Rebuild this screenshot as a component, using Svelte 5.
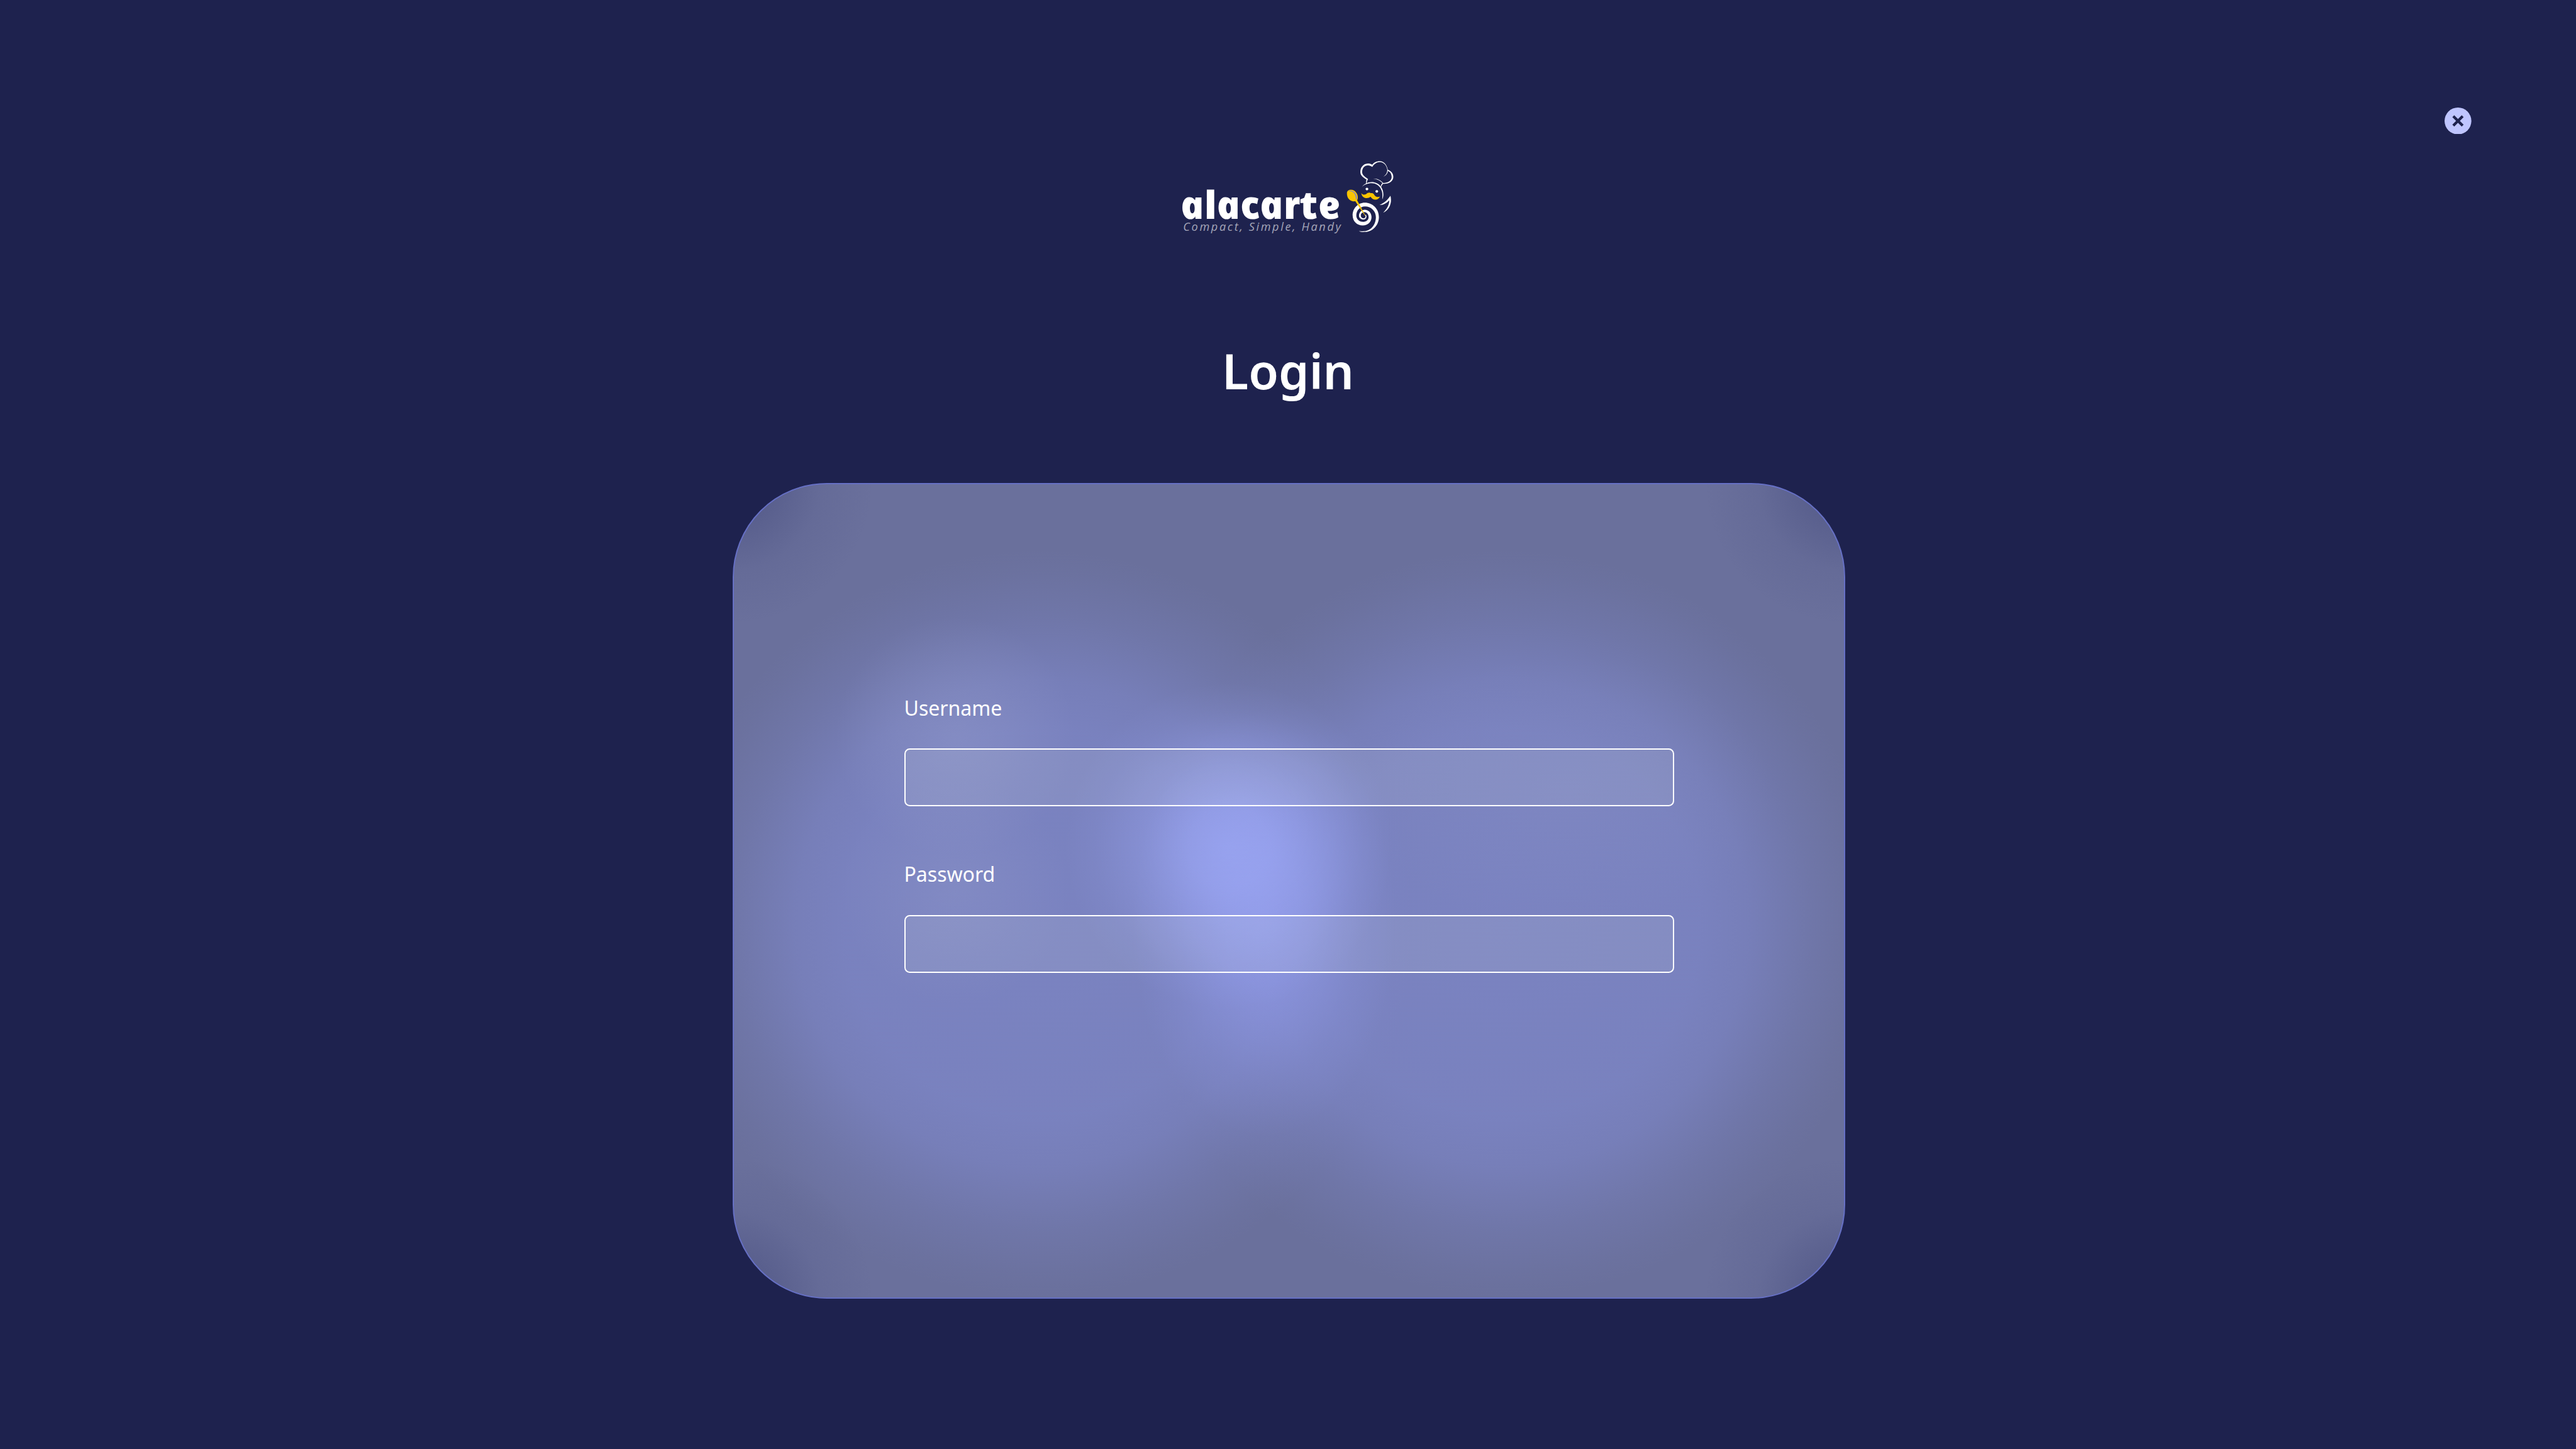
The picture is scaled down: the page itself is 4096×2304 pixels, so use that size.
<script>
  const fields = [
    { id: 'username', label: 'Username', type: 'text' },
    { id: 'password', label: 'Password', type: 'password' }
  ];
</script>

<main class="page">
  <header class="topbar">
    <button class="close" type="button" aria-label="Close">
      <svg viewBox="0 0 80 80" width="100%" height="100%">
        <circle cx="40" cy="40" r="40" fill="#bfc5ff" />
        <path d="M26 26 L54 54 M54 26 L26 54" stroke="#1e224e" stroke-width="8" />
      </svg>
    </button>
  </header>

  <svg class="logo" viewBox="3520 470 640 230" role="img" aria-label="alacarte">
    <!-- the italic cut has the single-storey a; the skew sets it upright -->
    <text class="brand" transform="translate(3527 651) skewX(12)" textLength="477" lengthAdjust="spacingAndGlyphs">alacarte</text>
    <text class="tagline" x="3528" y="687" textLength="470" lengthAdjust="spacing">Compact, Simple, Handy</text>
    <g transform="translate(3980 460) scale(0.33333)" fill="#fff">
      <!-- chef hat -->
      <path d="M335 92 C322 82 305 80 295 81 C252 84 229 118 229 158 C230 190 255 205 284 224 C280 238 280 250 280 263 L286 261 C286 246 290 232 298 220 C262 195 245 180 245 157 C245 122 265 97 297 97 C312 97 325 103 336 111 C352 85 375 67 405 68 C440 70 463 98 470 135 C470 165 455 188 430 200 C460 190 474 170 475 147 C497 155 509 178 509 203 C508 235 475 256 434 255 C415 235 385 214 346 216 C385 222 405 236 427 255 C418 264 413 275 411 284 L417 291 C417 280 423 270 433 262 C485 266 524 238 524 200 C524 170 505 147 475 137 C465 90 440 60 402 60 C375 60 350 72 335 92Z" />
      <!-- head -->
      <path d="M240 294 C262 262 295 246 330 246 C395 246 438 300 435 362 C434 378 430 390 427 398 L425 398 C428 360 427 335 416 315 C400 275 365 257 330 257 C295 257 262 270 240 294Z" />
      <circle cx="288" cy="309" r="12" />
      <circle cx="376" cy="330" r="12" />
      <!-- collar -->
      <path d="M498 369 C504 390 504 410 502 425 C495 470 470 505 433 521 C465 490 488 450 488 410 C465 435 430 455 401 452 C440 435 475 405 498 369Z" />
      <!-- spiral body -->
      <path d="M217 685 C232 694 250 694 272 693 C342 690 395 630 395 560 C395 487 340 431 268 431 C208 431 160 482 160 545 C160 597 200 635 250 635 C296 635 329 602 329 560 C329 522 302 494 268 494 C239 494 217 518 217 548 C217 568 236 582 255 582 C272 582 284 569 284 553 C284 546 280 541 275 539 L270 545 C274 547 276 550 275 554 C274 564 266 571 257 571 C243 570 233 560 233 546 C233 528 248 515 266 515 C288 516 303 535 303 560 C303 586 280 603 252 603 C218 603 193 578 193 545 C193 500 226 464 270 464 C326 464 368 506 368 560 C368 632 320 684 262 686 C245 687 230 684 217 685Z" />
      <!-- moustache and spoon -->
      <g fill="#fac400">
        <path d="M238 345 C250 362 265 362 280 355 C298 340 312 338 322 346 C340 342 350 352 355 364 C366 380 385 385 404 376 C396 395 380 405 360 404 C340 400 330 392 320 377 C308 388 290 392 272 388 C250 382 240 365 238 345Z" />
        <path d="M109 345 C110 320 135 310 160 317 C190 327 210 360 206 392 C205 401 202 405 200 409 L274 546 L270 547 L184 418 C145 424 108 400 109 345Z" />
      </g>
      <path fill="#6b78f0" d="M128 324 C150 316 175 332 187 352 C199 372 201 388 194 402 L190 402 C190 370 180 340 150 330 C140 326 133 327 128 328Z" />
    </g>
  </svg>

  <h1>Login</h1>

  <form class="card">
    {#each fields as field (field.id)}
      <div class="field">
        <label for={field.id}>{field.label}</label>
        <input id={field.id} type={field.type} />
      </div>
    {/each}
  </form>
</main>

<style>
  :global(body) {
    margin: 0;
    background: #1e224e;
  }
  .page {
    box-sizing: border-box;
    width: 4096px;
    height: 2304px;
    overflow: hidden;
    background: #1e224e;
    color: #fff;
    font-family: 'Noto Sans', 'Open Sans', sans-serif;
    display: flex;
    flex-direction: column;
    align-items: center;
  }
  .topbar {
    box-sizing: border-box;
    width: 100%;
    height: 250.67px;
    padding: 170.67px 166.3px 0 0;
    display: flex;
    justify-content: flex-end;
    align-items: flex-start;
    flex: none;
  }
  .close {
    width: 42.67px;
    height: 42.67px;
    padding: 0;
    border: 0;
    background: none;
  }
  .close svg {
    display: block;
  }
  .logo {
    display: block;
    flex: none;
    width: 341.33px;
    height: 122.67px;
    overflow: visible;
  }
  .brand {
    font-family: 'Open Sans', sans-serif;
    font-size: 115px;
    font-style: italic;
    font-weight: 800;
    fill: #fff;
  }
  .tagline {
    font-family: 'Open Sans', sans-serif;
    font-style: italic;
    font-size: 34px;
    fill: #a5a6b9;
  }
  h1 {
    flex: none;
    margin: 163.5px 0 0;
    height: 231.17px;
    font-size: 77.5px;
    line-height: 104px;
    font-weight: 600;
  }
  .card {
    box-sizing: border-box;
    flex: none;
    width: 1769px;
    height: 1297px;
    margin-left: 2px;
    padding: 330px 271px 0;
    border: 2px solid #6670c5;
    border-radius: 149.5px;
    background:
      radial-gradient(circle 225px at 0 0, rgba(40, 46, 98, 0.42), rgba(40, 46, 98, 0.26) 28%, rgba(40, 46, 98, 0.08) 62%, rgba(40, 46, 98, 0)),
      radial-gradient(circle 225px at 100% 0, rgba(40, 46, 98, 0.42), rgba(40, 46, 98, 0.26) 28%, rgba(40, 46, 98, 0.08) 62%, rgba(40, 46, 98, 0)),
      radial-gradient(circle 225px at 0 100%, rgba(40, 46, 98, 0.42), rgba(40, 46, 98, 0.26) 28%, rgba(40, 46, 98, 0.08) 62%, rgba(40, 46, 98, 0)),
      radial-gradient(circle 225px at 100% 100%, rgba(40, 46, 98, 0.42), rgba(40, 46, 98, 0.26) 28%, rgba(40, 46, 98, 0.08) 62%, rgba(40, 46, 98, 0)),
      radial-gradient(circle 260px at 44.6% 44.5%, rgba(162, 174, 255, 0.62), rgba(162, 174, 255, 0.53) 25%, rgba(162, 174, 255, 0.3) 52%, rgba(162, 174, 255, 0.08) 82%, rgba(162, 174, 255, 0)),
      radial-gradient(ellipse 210px 340px at 47.8% 54%, rgba(155, 165, 250, 0.45), rgba(155, 165, 250, 0.35) 30%, rgba(155, 165, 250, 0.1) 72%, rgba(155, 165, 250, 0)),
      radial-gradient(circle 190px at 20% 31%, rgba(150, 158, 204, 0.36), rgba(150, 158, 204, 0.22) 45%, rgba(150, 158, 204, 0)),
      radial-gradient(circle 180px at 20% 50%, rgba(150, 158, 204, 0.28), rgba(150, 158, 204, 0.16) 45%, rgba(150, 158, 204, 0)),
      radial-gradient(ellipse 330px 220px at 75% 38%, rgba(150, 158, 204, 0.14), rgba(150, 158, 204, 0)),
      radial-gradient(circle 595px at 27.5% 54%, rgba(133, 143, 217, 0.6), rgba(133, 143, 217, 0.57) 52%, rgba(133, 143, 217, 0.47) 65%, rgba(133, 143, 217, 0.2) 82%, rgba(133, 143, 217, 0.05) 94%, rgba(133, 143, 217, 0)),
      radial-gradient(circle 595px at 69.5% 54%, rgba(133, 143, 217, 0.6), rgba(133, 143, 217, 0.57) 52%, rgba(133, 143, 217, 0.47) 65%, rgba(133, 143, 217, 0.2) 82%, rgba(133, 143, 217, 0.05) 94%, rgba(133, 143, 217, 0)),
      #6a709c;
    background-origin: border-box;
  }
  .field {
    height: 264.53px;
  }
  label {
    display: block;
    height: 90.4px;
    font-size: 32px;
    line-height: 52px;
  }
  input {
    display: block;
    box-sizing: border-box;
    width: 1224.5px;
    height: 91.7px;
    padding: 0 16px;
    border: 2px solid #fff;
    border-radius: 8.5px;
    background: rgba(217, 220, 225, 0.12);
    color: #fff;
    font: inherit;
    font-size: 32px;
    outline: none;
  }
</style>
